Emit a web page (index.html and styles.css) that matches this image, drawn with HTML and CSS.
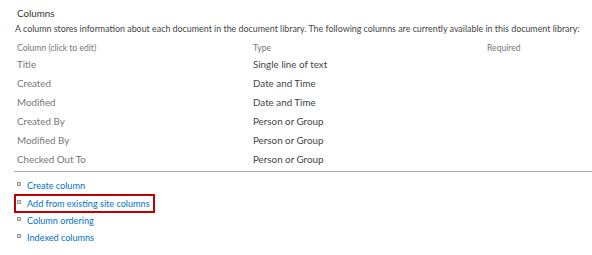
FILE: index.html
```html
<!DOCTYPE html>
<html lang="en">
<head>
    <meta charset="UTF-8">
    <title>Columns</title>
    <link rel="stylesheet" href="styles.css">
</head>
<body>
    <div class="section">
        <h3 class="section-title">Columns</h3>
        <p class="description">A column stores information about each document in the document library. The following columns are currently available in this document library:</p>
        <table class="columns-table">
            <tr class="header-row">
                <th class="col-name">Column (click to edit)</th>
                <th class="col-type">Type</th>
                <th>Required</th>
            </tr>
            <tr><td>Title</td><td class="type">Single line of text</td><td></td></tr>
            <tr><td>Created</td><td class="type">Date and Time</td><td></td></tr>
            <tr><td>Modified</td><td class="type">Date and Time</td><td></td></tr>
            <tr><td>Created By</td><td class="type">Person or Group</td><td></td></tr>
            <tr><td>Modified By</td><td class="type">Person or Group</td><td></td></tr>
            <tr class="last-row"><td>Checked Out To</td><td class="type">Person or Group</td><td></td></tr>
        </table>
        <ul class="links">
            <li><span class="bullet"></span><a href="#">Create column</a></li>
            <li class="highlight"><span class="bullet"></span><a href="#">Add from existing site columns</a></li>
            <li><span class="bullet"></span><a href="#">Column ordering</a></li>
            <li><span class="bullet"></span><a href="#">Indexed columns</a></li>
        </ul>
    </div>
</body>
</html>
```

FILE: styles.css
```css
body {
    margin: 0;
    font-family: Lato, Arial, sans-serif;
    color: #444;
    background: #fff;
}
.section {
    padding: 5px 0 0 14px;
}
.section-title {
    margin: 0 0 0 3px;
    font-size: 9.8px;
    font-weight: normal;
    color: #333;
    line-height: 16px;
}
.description {
    margin: 0 0 0 1px;
    font-size: 8.9px;
    line-height: 16px;
    color: #444;
    white-space: nowrap;
}
.columns-table {
    border-collapse: collapse;
    width: 578px;
    margin-top: 3px;
    border-bottom: 1px solid #ababab;
}
.columns-table th {
    font-size: 8.6px;
    font-weight: normal;
    color: #777;
    text-align: left;
    padding: 0 0 0 3px;
    height: 15px;
}
.columns-table td {
    font-size: 9.8px;
    color: #777;
    padding: 0 0 0 3px;
    height: 19px;
    line-height: 19px;
    vertical-align: top;
}
.columns-table .last-row td {
    padding-bottom: 2px;
}
.columns-table td.type {
    color: #444;
}
.col-name {
    width: 233px;
}
.col-type {
    width: 231px;
}
.links {
    list-style: none;
    margin: 5px 0 0 0;
    padding: 0;
}
.links li {
    display: flex;
    align-items: flex-start;
    width: max-content;
    height: 17px;
    padding-left: 3px;
    padding-right: 4px;
    font-size: 9.1px;
    line-height: 17px;
}
.links li.highlight {
    margin: 1px 0 0 1px;
    padding-left: 2px;
    outline: 2px solid #c00000;
    outline-offset: -1px;
}
.bullet {
    width: 2px;
    height: 2px;
    margin: 5px 6px 0 0;
    border: 1px solid #9c9c9c;
    background: #d6d6d6;
}
.links a {
    color: #0072c6;
    text-decoration: none;
}
```
